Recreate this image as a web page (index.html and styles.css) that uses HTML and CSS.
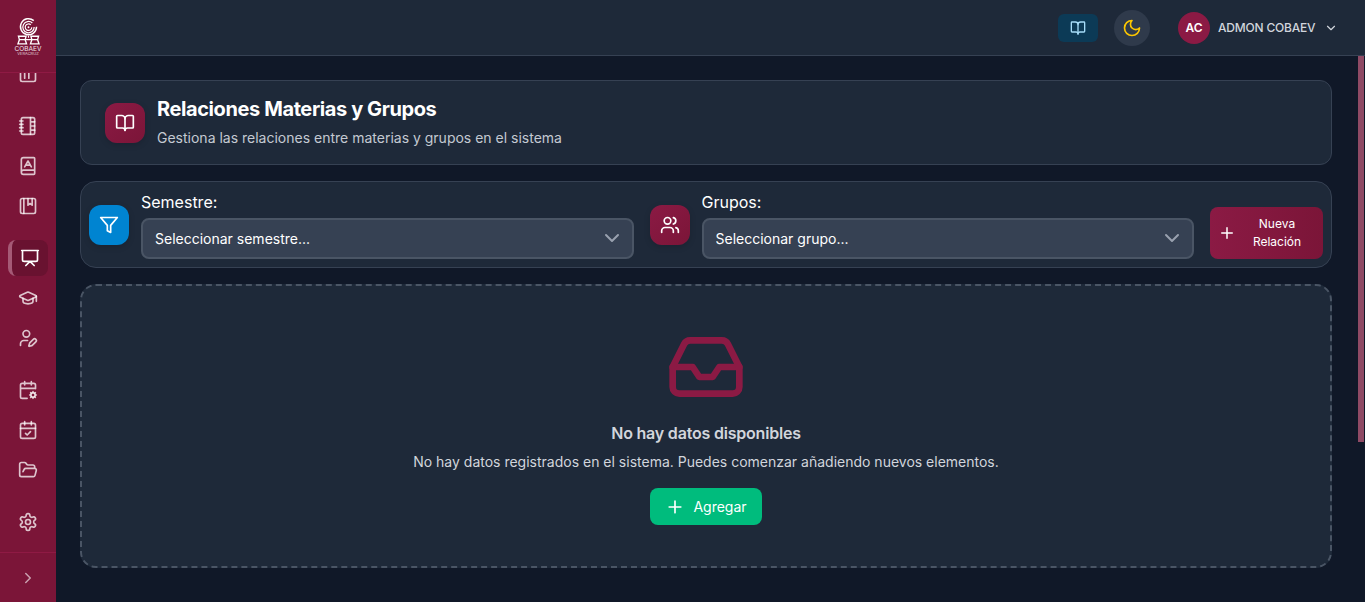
FILE: index.html
```html
<!DOCTYPE html>
<html lang="es">
<head>
    <meta charset="UTF-8">
    <meta name="viewport" content="width=device-width, initial-scale=1.0">
    <title>Relaciones Materias y Grupos</title>
    <link rel="stylesheet" href="styles.css">
</head>
<body>
    <aside class="sidebar">
        <div class="sidebar-logo">
            <svg class="logo-mark" viewBox="0 0 24 28" fill="none" stroke="#fff">
                <path d="M17.5 3.2A8.4 8.4 0 1 0 20.4 9.6" stroke-width="1.5"/>
                <path d="M16 5.6A5.9 5.9 0 1 0 17.9 9.8" stroke-width="1.3"/>
                <path d="M14.4 7.6A3.4 3.4 0 1 0 15.4 10" stroke-width="1.2"/>
                <circle cx="12" cy="10" r="1" fill="#fff" stroke="none"/>
                <path d="M1.5 19.5h8l-1 3.5 1.5 4.5H1l1.5-4.5zM14.5 19.5h8l-1 3.5 1.5 4.5h-9l1.5-4.5z" stroke-width="1.4"/>
                <path d="M2 23h20M12 19v2" stroke-width="1.2"/>
            </svg>
            <span class="logo-name">COBAEV</span>
            <span class="logo-sub">VERACRUZ</span>
        </div>

        <nav class="sidebar-nav">
            <ul class="nav-list">
                <li class="nav-item">
                    <svg class="icon" viewBox="0 0 24 24"><rect x="3" y="3" width="18" height="18" rx="2"/><path d="M8 3v14M13 3v14"/></svg>
                </li>
                <li class="nav-item nav-gap">
                    <svg class="icon" viewBox="0 0 24 24"><path d="M2 6h4M2 10h4M2 14h4M2 18h4M15 2v20M15 7h5M15 12h5M15 17h5"/><rect x="4" y="2" width="16" height="20" rx="2"/></svg>
                </li>
                <li class="nav-item">
                    <svg class="icon" viewBox="0 0 24 24"><path d="M4 19.5v-15A2.5 2.5 0 0 1 6.5 2H19a1 1 0 0 1 1 1v18a1 1 0 0 1-1 1H6.5a1 1 0 0 1 0-5H20"/><path d="m8 13 4-7 4 7M9.1 11h5.7"/></svg>
                </li>
                <li class="nav-item">
                    <svg class="icon" viewBox="0 0 24 24"><rect x="3" y="3" width="18" height="18" rx="2"/><path d="M7 3v18M12 3v8l2.5-2 2.5 2V3"/></svg>
                </li>
                <li class="nav-item nav-gap active">
                    <svg class="icon" viewBox="0 0 24 24"><path d="M2 3h20M21 3v11a2 2 0 0 1-2 2H5a2 2 0 0 1-2-2V3M7 21l5-5 5 5"/></svg>
                </li>
                <li class="nav-item">
                    <svg class="icon" viewBox="0 0 24 24"><path d="M21.42 10.922a1 1 0 0 0-.019-1.838L12.83 5.18a2 2 0 0 0-1.66 0L2.6 9.08a1 1 0 0 0 0 1.832l8.57 3.908a2 2 0 0 0 1.66 0z"/><path d="M22 10v6M6 12.5V16a6 3 0 0 0 12 0v-3.5"/></svg>
                </li>
                <li class="nav-item">
                    <svg class="icon" viewBox="0 0 24 24"><path d="M11.5 15H7a4 4 0 0 0-4 4v2"/><path d="M21.378 16.626a1 1 0 0 0-3.004-3.004l-4.01 4.012a2 2 0 0 0-.506.854l-.837 2.87a.5.5 0 0 0 .62.62l2.87-.837a2 2 0 0 0 .854-.506z"/><circle cx="10" cy="7" r="4"/></svg>
                </li>
                <li class="nav-item nav-gap">
                    <svg class="icon" viewBox="0 0 24 24"><path d="M16 2v4M8 2v4M3 10h18M21 10.5V6a2 2 0 0 0-2-2H5a2 2 0 0 0-2 2v14a2 2 0 0 0 2 2h6"/><circle cx="18" cy="18" r="2.5"/><path d="M18 14v1M18 21v1M14 18h1M21 18h1M15.2 15.2l.7.7M20.1 20.1l.7.7M15.2 20.8l.7-.7M20.1 15.9l.7-.7"/></svg>
                </li>
                <li class="nav-item">
                    <svg class="icon" viewBox="0 0 24 24"><path d="M8 2v4M16 2v4M3 10h18"/><rect x="3" y="4" width="18" height="18" rx="2"/><path d="m9 16 2 2 4-4"/></svg>
                </li>
                <li class="nav-item">
                    <svg class="icon" viewBox="0 0 24 24"><path d="m6 14 1.5-2.9A2 2 0 0 1 9.24 10H20a2 2 0 0 1 1.94 2.5l-1.54 6a2 2 0 0 1-1.95 1.5H4a2 2 0 0 1-2-2V5a2 2 0 0 1 2-2h3.9a2 2 0 0 1 1.69.9l.81 1.2a2 2 0 0 0 1.67.9H18a2 2 0 0 1 2 2v2"/></svg>
                </li>
                <li class="nav-item nav-gap">
                    <svg class="icon" viewBox="0 0 24 24"><path d="M12.22 2h-.44a2 2 0 0 0-2 2v.18a2 2 0 0 1-1 1.73l-.43.25a2 2 0 0 1-2 0l-.15-.08a2 2 0 0 0-2.73.73l-.22.38a2 2 0 0 0 .73 2.73l.15.1a2 2 0 0 1 1 1.72v.51a2 2 0 0 1-1 1.74l-.15.09a2 2 0 0 0-.73 2.73l.22.38a2 2 0 0 0 2.73.73l.15-.08a2 2 0 0 1 2 0l.43.25a2 2 0 0 1 1 1.73V20a2 2 0 0 0 2 2h.44a2 2 0 0 0 2-2v-.18a2 2 0 0 1 1-1.73l.43-.25a2 2 0 0 1 2 0l.15.08a2 2 0 0 0 2.73-.73l.22-.39a2 2 0 0 0-.73-2.73l-.15-.08a2 2 0 0 1-1-1.74v-.5a2 2 0 0 1 1-1.74l.15-.09a2 2 0 0 0 .73-2.73l-.22-.38a2 2 0 0 0-2.73-.73l-.15.08a2 2 0 0 1-2 0l-.43-.25a2 2 0 0 1-1-1.73V4a2 2 0 0 0-2-2z"/><circle cx="12" cy="12" r="3"/></svg>
                </li>
            </ul>
        </nav>

        <div class="sidebar-footer">
            <svg class="icon icon-toggle" viewBox="0 0 24 24"><path d="m9 18 6-6-6-6"/></svg>
        </div>
    </aside>

    <div class="page">
        <header class="topbar">
            <button class="guide-btn">
                <svg class="icon" viewBox="0 0 24 24"><path d="M12 7v14"/><path d="M3 18a1 1 0 0 1-1-1V4a1 1 0 0 1 1-1h5a4 4 0 0 1 4 4 4 4 0 0 1 4-4h5a1 1 0 0 1 1 1v13a1 1 0 0 1-1 1h-6a3 3 0 0 0-3 3 3 3 0 0 0-3-3z"/></svg>
            </button>
            <button class="theme-btn">
                <svg class="icon" viewBox="0 0 24 24"><path d="M12 3a6 6 0 0 0 9 9 9 9 0 1 1-9-9Z"/></svg>
            </button>
            <div class="user-menu">
                <span class="avatar">AC</span>
                <span class="user-name">ADMON COBAEV</span>
                <svg class="icon" viewBox="0 0 24 24"><path d="m6 9 6 6 6-6"/></svg>
            </div>
        </header>

        <div class="content-wrap">
            <main class="content">
                <section class="card title-card">
                    <span class="icon-box maroon">
                        <svg class="icon" viewBox="0 0 24 24"><path d="M12 7v14"/><path d="M3 18a1 1 0 0 1-1-1V4a1 1 0 0 1 1-1h5a4 4 0 0 1 4 4 4 4 0 0 1 4-4h5a1 1 0 0 1 1 1v13a1 1 0 0 1-1 1h-6a3 3 0 0 0-3 3 3 3 0 0 0-3-3z"/></svg>
                    </span>
                    <div class="title-text">
                        <h1>Relaciones Materias y Grupos</h1>
                        <p>Gestiona las relaciones entre materias y grupos en el sistema</p>
                    </div>
                </section>

                <section class="card filter-card">
                    <span class="icon-box blue">
                        <svg class="icon" viewBox="0 0 24 24"><path d="M22 3H2l8 9.46V19l4 2v-8.54L22 3z"/></svg>
                    </span>
                    <div class="field">
                        <label for="semestre">Semestre:</label>
                        <div class="select-wrap">
                            <select id="semestre">
                                <option>Seleccionar semestre...</option>
                            </select>
                            <svg class="icon" viewBox="0 0 24 24"><path d="m6 9 6 6 6-6"/></svg>
                        </div>
                    </div>
                    <span class="icon-box maroon">
                        <svg class="icon" viewBox="0 0 24 24"><path d="M16 21v-2a4 4 0 0 0-4-4H6a4 4 0 0 0-4 4v2"/><circle cx="9" cy="7" r="4"/><path d="M22 21v-2a4 4 0 0 0-3-3.87M16 3.13a4 4 0 0 1 0 7.75"/></svg>
                    </span>
                    <div class="field">
                        <label for="grupo">Grupos:</label>
                        <div class="select-wrap">
                            <select id="grupo">
                                <option>Seleccionar grupo...</option>
                            </select>
                            <svg class="icon" viewBox="0 0 24 24"><path d="m6 9 6 6 6-6"/></svg>
                        </div>
                    </div>
                    <button class="new-btn">
                        <svg class="icon" viewBox="0 0 24 24"><path d="M5 12h14M12 5v14"/></svg>
                        <span>Nueva<br>Relación</span>
                    </button>
                </section>

                <section class="empty-card">
                    <svg class="icon empty-icon" viewBox="0 0 24 24"><path d="M22 12h-6l-2 3h-4l-2-3H2"/><path d="M5.45 5.11 2 12v6a2 2 0 0 0 2 2h16a2 2 0 0 0 2-2v-6l-3.45-6.89A2 2 0 0 0 16.76 4H7.24a2 2 0 0 0-1.79 1.11z"/></svg>
                    <h2>No hay datos disponibles</h2>
                    <p>No hay datos registrados en el sistema. Puedes comenzar añadiendo nuevos elementos.</p>
                    <button class="add-btn">
                        <svg class="icon" viewBox="0 0 24 24"><path d="M5 12h14M12 5v14"/></svg>
                        Agregar
                    </button>
                </section>
            </main>
            <div class="scroll-thumb"></div>
        </div>
    </div>
</body>
</html>
```

FILE: styles.css
```css
* {
    box-sizing: border-box;
}
body {
    font-family: Inter, "Noto Sans", sans-serif;
    margin: 0;
    height: 100vh;
    overflow: hidden;
    display: flex;
    background-color: #101828;
    color: #fff;
}
ul {
    list-style: none;
    margin: 0;
    padding: 0;
}
button {
    font-family: inherit;
    border: none;
    color: #fff;
    cursor: pointer;
}
.icon {
    display: block;
    width: 20px;
    height: 20px;
    fill: none;
    stroke: currentColor;
    stroke-width: 2;
    stroke-linecap: round;
    stroke-linejoin: round;
    flex-shrink: 0;
}

/* sidebar */
.sidebar {
    width: 56px;
    flex-shrink: 0;
    display: flex;
    flex-direction: column;
    background-color: #7b1538;
}
.sidebar-logo {
    height: 73px;
    flex-shrink: 0;
    padding-top: 17px;
    display: flex;
    flex-direction: column;
    align-items: center;
    border-bottom: 1px solid #8f1a44;
    overflow: hidden;
    color: #f3e6eb;
}
.logo-mark {
    display: block;
    width: 23px;
    height: 28px;
}
.logo-name {
    font-size: 6.5px;
    line-height: 6px;
    margin-top: 1px;
}
.logo-sub {
    font-size: 4px;
    line-height: 4px;
    opacity: 0.8;
}
.sidebar-nav {
    flex: 1;
    overflow: hidden;
}
.nav-list {
    margin-top: -21px;
    padding: 0 8px;
}
.nav-item {
    height: 36px;
    margin-top: 4px;
    border-radius: 8px;
    display: flex;
    align-items: center;
    justify-content: center;
    color: rgba(255, 255, 255, 0.75);
}
.nav-gap {
    margin-top: 16px;
}
.nav-item.active {
    background-color: #691230;
    border-left: 4px solid #a55a76;
    color: #fff;
}
.sidebar-footer {
    height: 50px;
    flex-shrink: 0;
    border-top: 1px solid #8f1a44;
    display: flex;
    align-items: center;
    justify-content: center;
}
.icon-toggle {
    width: 18px;
    height: 18px;
    color: rgba(255, 255, 255, 0.6);
}

/* topbar */
.page {
    flex: 1;
    min-width: 0;
    display: flex;
    flex-direction: column;
}
.topbar {
    height: 56px;
    flex-shrink: 0;
    padding-right: 27px;
    display: flex;
    align-items: center;
    justify-content: flex-end;
    background-color: #1e2939;
    border-bottom: 1px solid #364153;
}
.guide-btn {
    width: 40px;
    height: 28px;
    margin-right: 16px;
    border-radius: 6px;
    background-color: #0c3a56;
    color: #a5dcf8;
    display: flex;
    align-items: center;
    justify-content: center;
}
.guide-btn .icon {
    width: 16px;
    height: 16px;
}
.theme-btn {
    width: 36px;
    height: 36px;
    margin-right: 28px;
    border-radius: 50%;
    background-color: #2f3a4b;
    color: #fdc700;
    display: flex;
    align-items: center;
    justify-content: center;
}
.user-menu {
    display: flex;
    align-items: center;
    gap: 8px;
    color: #d1d5dc;
}
.avatar {
    width: 32px;
    height: 32px;
    border-radius: 50%;
    background-color: #8b1a44;
    color: #fff;
    font-size: 12px;
    font-weight: 600;
    display: flex;
    align-items: center;
    justify-content: center;
}
.user-name {
    width: 98px;
    font-size: 12px;
    font-weight: 500;
    letter-spacing: -0.2px;
}
.user-menu .icon {
    width: 14px;
    height: 14px;
}

/* content */
.content-wrap {
    flex: 1;
    min-height: 0;
    position: relative;
}
.content {
    height: 100%;
    overflow: hidden;
    padding: 24px 33px 0 24px;
    display: flex;
    flex-direction: column;
    gap: 16px;
}
/* the browser hides real scrollbars in this window, so the thumb is drawn */
.scroll-thumb {
    position: absolute;
    top: 0;
    right: 1px;
    width: 6px;
    height: 386px;
    background-color: #8f4a65;
}
.card {
    background-color: #1e2939;
    border: 1px solid #364153;
    display: flex;
    align-items: center;
    flex-shrink: 0;
}
.icon-box {
    width: 40px;
    height: 40px;
    flex-shrink: 0;
    border-radius: 12px;
    display: flex;
    align-items: center;
    justify-content: center;
    box-shadow: 0 2px 6px rgba(0, 0, 0, 0.15);
}
.maroon {
    background: linear-gradient(135deg, #8b1a44, #7b1538);
}
.blue {
    background-color: #0084d1;
}
.title-card {
    height: 85px;
    padding: 0 24px;
    gap: 12px;
    border-radius: 12px;
}
.title-text {
    margin-top: -2px;
}
.title-card h1 {
    margin: 0;
    font-size: 20px;
    line-height: 26px;
    font-weight: 700;
    letter-spacing: -0.4px;
}
.title-card p {
    margin: 6px 0 0;
    font-size: 14px;
    line-height: 20px;
    color: #c4c9d2;
}
.filter-card {
    height: 87px;
    padding: 8px;
    border-radius: 16px;
}
.field {
    flex: 1;
    margin: 0 16px 0 12px;
}
.field label {
    display: block;
    font-size: 16px;
    line-height: 24px;
    margin-bottom: 4px;
}
.select-wrap {
    position: relative;
    color: #99a1af;
}
.select-wrap select {
    display: block;
    width: 100%;
    height: 41px;
    padding: 0 12px;
    appearance: none;
    font-family: inherit;
    font-size: 14px;
    font-weight: 400;
    color: #fff;
    background-color: #364153;
    border: 2px solid #4a5565;
    border-radius: 8px;
}
.select-wrap .icon {
    position: absolute;
    right: 10px;
    top: 8px;
    width: 24px;
    height: 24px;
}
.new-btn {
    width: 113px;
    height: 52px;
    flex-shrink: 0;
    align-self: flex-end;
    padding: 0 8px;
    border-radius: 8px;
    background: linear-gradient(90deg, #8b1a44, #7b1538);
    display: flex;
    align-items: center;
    gap: 3px;
    font-size: 12px;
    font-weight: 400;
    line-height: 18px;
}
.new-btn .icon {
    width: 18px;
    height: 18px;
}
.new-btn span {
    flex: 1;
    text-align: center;
}
.empty-card {
    height: 284px;
    flex-shrink: 0;
    padding-top: 41px;
    background-color: #1e2939;
    border: 2px dashed #4a5565;
    border-radius: 16px;
    display: flex;
    flex-direction: column;
    align-items: center;
}
.empty-icon {
    width: 80px;
    height: 80px;
    color: #8b1a44;
}
.empty-card h2 {
    margin: 14px 0 0;
    font-size: 16px;
    line-height: 24px;
    font-weight: 600;
    letter-spacing: -0.2px;
    color: #d1d5dc;
}
.empty-card p {
    margin: 7px 0 0;
    font-size: 14px;
    line-height: 20px;
    color: #d1d5dc;
}
.add-btn {
    width: 112px;
    height: 37px;
    margin-top: 16px;
    padding: 0;
    border-radius: 8px;
    background-color: #00bc7d;
    display: flex;
    align-items: center;
    justify-content: center;
    gap: 8px;
    font-size: 14px;
    font-weight: 400;
}
```
